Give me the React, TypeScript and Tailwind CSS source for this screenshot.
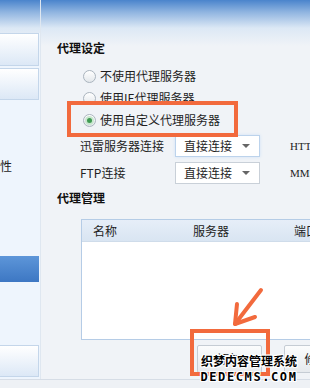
const cjk = "font-['Noto_Sans_CJK_SC','Noto_Sans',sans-serif]";
const outline =
  "[text-shadow:1px_0_#fff,-1px_0_#fff,0_1px_#fff,0_-1px_#fff,1px_1px_#fff,-1px_-1px_#fff,1px_-1px_#fff,-1px_1px_#fff]";

function Radio({ checked, label }: { checked?: boolean; label: string }) {
  return (
    <div className="flex h-[22px] items-center gap-[4px]">
      <span className="flex h-[13px] w-[13px] items-center justify-center rounded-full border border-[#aab4be] bg-gradient-to-b from-[#ffffff] to-[#e3e7eb]">
        {checked && <span className="h-[5px] w-[5px] rounded-full bg-[#3f9a52] ring-2 ring-[#c9e6cf]" />}
      </span>
      <span className="whitespace-nowrap text-[12px] leading-none text-[#1e1e1e]">{label}</span>
    </div>
  );
}

function Select({ label, extra, focused }: { label: string; extra: string; focused?: boolean }) {
  return (
    <div className="flex h-[22px] items-center">
      <span className="w-[95px] shrink-0 whitespace-nowrap text-[12px] leading-none text-[#222]">{label}</span>
      <div
        className={`flex h-[22px] w-[85px] shrink-0 items-center justify-between border bg-white pl-[8px] pr-[9px] ${
          focused ? "border-[#bcd3ec] shadow-[0_0_3px_#cfe2f7]" : "border-[#c9d0d8]"
        }`}
      >
        <span className="whitespace-nowrap text-[12px] leading-none text-[#1e1e1e]">直接连接</span>
        <span className="h-0 w-0 border-x-[4px] border-t-[4px] border-x-transparent border-t-[#666]" />
      </div>
      <span className="ml-[30px] shrink-0 whitespace-nowrap font-['Liberation_Serif',serif] text-[11px] leading-none text-[#222]">
        {extra}
      </span>
    </div>
  );
}

function SideButton({ h }: { h: string }) {
  return <div className={`${h} w-full border border-l-0 border-[#c4d6ea] bg-gradient-to-b from-[#ffffff] to-[#dce8f6]`} />;
}

export default function App() {
  return (
    <div
      className={`relative flex h-[388px] w-[310px] flex-col overflow-hidden bg-[linear-gradient(to_bottom,#4a84cc_0px,#8fb4e0_12px,#dce8f5_28px,#f0f3f7_46px)] ${cjk}`}
    >
      <div className="flex h-[379px]">
        {/* sidebar */}
        <div className="flex w-[41px] shrink-0 flex-col border-r border-[#dfe7f0] bg-[linear-gradient(to_bottom,transparent_0px,transparent_33px,#eef5fd_33px)] pr-[1px] pt-[33px]">
          <SideButton h="h-[33px]" />
          <div className="mt-[2px]">
            <SideButton h="h-[32px]" />
          </div>
          <div className="mt-[59px] flex h-[14px] items-center">
            <span className="ml-[-12px] whitespace-nowrap text-[12px] leading-none text-[#222]">属性</span>
          </div>
          <div className="mt-[83px] h-[26px] w-full bg-gradient-to-b from-[#5d96d9] to-[#3d77c3]" />
          <div className="mt-[63px]">
            <SideButton h="h-[32px]" />
          </div>
        </div>

        {/* main */}
        <div className="flex min-w-0 flex-1 flex-col pl-[16px]">
          <div className="mt-[40px] h-[16px] text-[12px] font-bold leading-[16px] text-[#111]">代理设定</div>
          <div className="ml-[26px] mt-[9px] flex flex-col">
            <Radio label="不使用代理服务器" />
            <Radio label="使用IE代理服务器" />
            <Radio checked label="使用自定义代理服务器" />
          </div>
          <div className="ml-[23px] mt-[4px]">
            <Select label="迅雷服务器连接" extra="HTTP代理" focused />
          </div>
          <div className="ml-[23px] mt-[5px]">
            <Select label="FTP连接" extra="MMS/RTSP" />
          </div>
          <div className="mt-[6px] h-[16px] text-[12px] font-bold leading-[16px] text-[#111]">代理管理</div>
          <div className="ml-[24px] mt-[13px] flex h-[121px] w-[260px] shrink-0 flex-col border border-r-0 border-[#b5cce6] bg-white">
            <div className="flex h-[22px] items-center border-b border-[#cfdcea] bg-gradient-to-b from-[#e6eef8] to-[#d9e5f2] text-[12px] leading-none text-[#222]">
              <span className="ml-[11px] w-[100px] shrink-0">名称</span>
              <span className="w-[101px] shrink-0">服务器</span>
              <span className="shrink-0 whitespace-nowrap">端口</span>
            </div>
          </div>
          <div className="ml-[140px] mt-[5px] flex gap-[22px]">
            <div className="flex h-[28px] w-[65px] shrink-0 items-center justify-center rounded-[2px] border border-[#c5ccd4] bg-gradient-to-b from-[#fbfcfd] to-[#e6eaee] text-[12px] text-[#222]">
              添加
            </div>
            <div className="flex h-[28px] w-[65px] shrink-0 items-center justify-center rounded-[2px] border border-[#c5ccd4] bg-gradient-to-b from-[#fbfcfd] to-[#e6eaee] text-[12px] text-[#222]">
              修改
            </div>
          </div>
        </div>
      </div>
      <div className="flex-1 border-t border-[#d6dde6] bg-[#eef1f5]" />

      {/* highlight overlays */}
      <div className="absolute left-[67px] top-[101px] h-[36px] w-[171px] border-[4px] border-[#f26a3d]" />
      <div className="absolute left-[190px] top-[329px] h-[47px] w-[80px] border-[4px] border-[#f26a3d]" />
      <svg className="absolute left-[225px] top-[282px]" width="45" height="50" viewBox="0 0 45 50">
        <g fill="none" stroke="#f26a3d" strokeWidth="4" strokeLinecap="round" strokeLinejoin="round">
          <path d="M36 8 L10 42" />
          <path d="M12 22 L10 42 L30 35" />
        </g>
      </svg>

      {/* watermark */}
      <div className={`absolute left-[200px] top-[352px] flex w-[98px] flex-col items-center text-black ${outline}`}>
        <span className="whitespace-nowrap text-[12px] font-bold leading-[18px]">织梦内容管理系统</span>
        <span className="whitespace-nowrap font-['DejaVu_Sans_Mono',monospace] text-[12px] font-bold leading-[14px] tracking-[1.6px]">
          DEDECMS.COM
        </span>
      </div>
    </div>
  );
}
